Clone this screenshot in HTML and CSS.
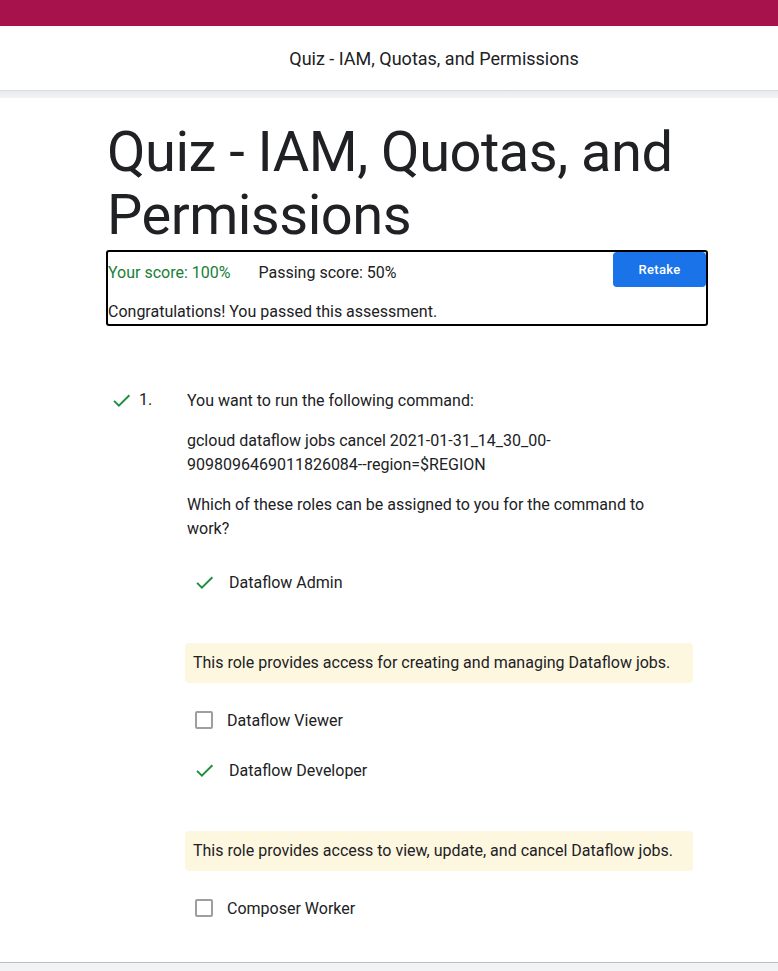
FILE: index.html
```html
<!DOCTYPE html>
<html>
<head>
<meta charset="utf-8">
<link rel="stylesheet" href="styles.css">
</head>
<body>
<div class="topbar"></div>
<header class="header"><span class="header-title">Quiz - IAM, Quotas, and Permissions</span></header>
<div class="gap"></div>
<main class="page">
  <div class="content">
    <h1 class="title">Quiz - IAM, Quotas, and Permissions</h1>
    <div class="score-box">
      <div class="score-row">
        <span class="your-score">Your score: 100%</span>
        <span class="passing">Passing score: 50%</span>
        <button class="retake">Retake</button>
      </div>
      <div class="congrats">Congratulations! You passed this assessment.</div>
    </div>

    <div class="question">
      <div class="q-mark">
        <svg class="check" width="21" height="21" viewBox="0 0 24 24"><path d="M3.5 12.5l5.5 5.5L21 6" fill="none" stroke="#1e8e3e" stroke-width="2.2"/></svg>
        <span class="q-num">1.</span>
      </div>
      <div class="q-body">
        <p class="q-text">You want to run the following command:</p>
        <p class="q-text">gcloud dataflow jobs cancel 2021-01-31_14_30_00-<br>9098096469011826084--region=$REGION</p>
        <p class="q-text">Which of these roles can be assigned to you for the command to work?</p>

        <ul class="answers">
          <li class="answer correct">
            <svg class="check" width="21" height="21" viewBox="0 0 24 24"><path d="M3.5 12.5l5.5 5.5L21 6" fill="none" stroke="#1e8e3e" stroke-width="2.2"/></svg>
            <span>Dataflow Admin</span>
          </li>
          <li class="feedback">This role provides access for creating and managing Dataflow jobs.</li>
          <li class="answer">
            <span class="box"></span>
            <span>Dataflow Viewer</span>
          </li>
          <li class="answer correct">
            <svg class="check" width="21" height="21" viewBox="0 0 24 24"><path d="M3.5 12.5l5.5 5.5L21 6" fill="none" stroke="#1e8e3e" stroke-width="2.2"/></svg>
            <span>Dataflow Developer</span>
          </li>
          <li class="feedback">This role provides access to view, update, and cancel Dataflow jobs.</li>
          <li class="answer">
            <span class="box"></span>
            <span>Composer Worker</span>
          </li>
        </ul>
      </div>
    </div>
  </div>
</main>
<div class="bottom"></div>
</body>
</html>
```
FILE: styles.css
```css
* { box-sizing: border-box; }
html, body { margin: 0; padding: 0; }
body {
  font-family: Roboto, "Liberation Sans", sans-serif;
  color: #202124;
  background: #f1f3f4;
}
.topbar { height: 26px; background: #a8124c; }
.header {
  height: 65px;
  background: #fff;
  border-bottom: 1px solid #dadce0;
  display: flex;
  align-items: center;
  justify-content: center;
  padding-left: 90px;
  padding-top: 1px;
}
.header-title { font-size: 18px; color: #202124; }
.gap { height: 7px; background: linear-gradient(#e8eaed, #f1f3f4); }
.page {
  background: #fff;
  height: 865px;
  border-bottom: 1px solid #bdbdbd;
  overflow: hidden;
}
.content {
  margin-left: 107px;
  width: 601px;
  padding-top: 23px;
}
.title {
  margin: 0;
  font-family: Roboto, sans-serif;
  font-weight: 400;
  font-size: 56px;
  line-height: 63px;
  letter-spacing: -0.5px;
  color: #202124;
}
.score-box {
  margin-top: 3px;
  margin-left: -1px;
  border: 2px solid #000;
  border-radius: 3px;
  height: 76px;
}
.score-row {
  display: flex;
  align-items: flex-start;
  height: 43px;
}
.your-score { color: #188038; font-size: 16px; margin-top: 11px; }
.passing { font-size: 16px; margin-left: 28px; margin-top: 11px; }
.retake {
  margin-left: auto;
  width: 93px;
  height: 35px;
  background: #1a73e8;
  color: #fff;
  border: none;
  border-radius: 4px;
  font-family: Roboto, sans-serif;
  font-weight: 500;
  font-size: 13px;
  letter-spacing: 0.3px;
}
.congrats { font-size: 16px; margin-top: 7px; }
.question {
  display: flex;
  margin-top: 63px;
}
.q-mark {
  width: 80px;
  display: flex;
  align-items: flex-start;
  gap: 7px;
  padding-left: 4px;
  padding-top: 1px;
}
.q-mark .q-num { font-size: 16px; line-height: 20px; }
.q-body { width: 510px; }
.q-text {
  margin: 0 0 16px 0;
  font-size: 16px;
  line-height: 24px;
  max-width: 490px;
}
.answers { list-style: none; margin: 0; padding: 0; }
.answer {
  display: flex;
  align-items: center;
  font-size: 16px;
  height: 24px;
  margin-left: 7px;
}
.answer .check { margin-right: 14px; }
.answer .box {
  width: 18px;
  height: 18px;
  border: 2px solid #9e9e9e;
  border-radius: 2px;
  margin: 0 14px 0 1px;
}
.answers .answer:first-child { margin-top: 29px; }
.feedback {
  margin: 49px 0 25px -2px;
  width: 508px;
  background: #fef7e0;
  border-radius: 4px;
  padding: 10px 8px;
  font-size: 16px;
  line-height: 20px;
}
.answer + .answer { margin-top: 26px; }
.bottom { height: 8px; }
```
